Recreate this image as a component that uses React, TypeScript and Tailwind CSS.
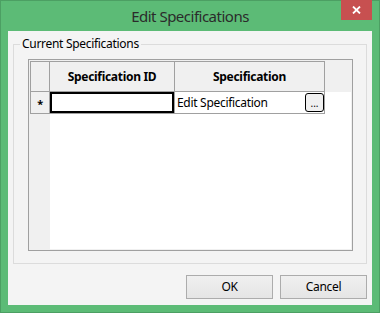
import React from 'react';

function CloseButton() {
  return (
    <div className="self-start justify-self-end -mt-px w-[31px] h-[20px] bg-[#c75050] flex items-center justify-center">
      <svg width="9" height="8" viewBox="0 0 9 8">
        <path d="M1 0.5 L8 7.5 M8 0.5 L1 7.5" stroke="#ffffff" strokeWidth="1.8" />
      </svg>
    </div>
  );
}

function DialogButton({ label }: { label: string }) {
  return (
    <button className="w-[87px] h-[24px] border border-[#acacac] bg-gradient-to-b from-[#f0f0f0] to-[#e5e5e5] text-[12px] tracking-[-0.3px] text-black leading-none">
      {label}
    </button>
  );
}

export default function App() {
  return (
    <div className="w-[380px] h-[313px] bg-[#5cbb76] border border-[#4c9f63] flex flex-col font-['Noto_Sans',sans-serif]">
      <div className="h-[30px] shrink-0 grid grid-cols-[1fr_auto_1fr] items-center px-[7px]">
        <div />
        <div className="text-[15px] tracking-[-0.5px] text-[#2b2b2b] leading-none">Edit Specifications</div>
        <CloseButton />
      </div>

      <div className="mx-[7px] mb-[7px] flex-1 bg-[#f4f4f4] flex flex-col px-[5px] tracking-[-0.3px]">
        {/* group box */}
        <div className="mt-[13px] w-[354px] h-[220px] border border-[#dcdcdc] flex flex-col">
          <div className="-mt-[9px] ml-[6px] self-start px-[2px] bg-[#f4f4f4] text-[12px] leading-[16px] text-black">
            Current Specifications
          </div>

          <div className="mt-[7px] ml-[14px] w-[325px] h-[192px] border border-[#a0a0a0] bg-[#f0f0f0] p-px flex flex-col text-[12px] text-black">
            <div className="h-[31px] flex">
              <div className="w-[20px] border border-[#a0a0a0]" />
              <div className="w-[125px] border-y border-r border-[#a0a0a0] flex items-center justify-center font-bold">
                Specification ID
              </div>
              <div className="w-[150px] border-y border-r border-[#a0a0a0] flex items-center justify-center font-bold">
                Specification
              </div>
              <div className="flex-1" />
            </div>

            <div className="h-[22px] flex">
              <div className="w-[20px] border-x border-b border-[#a0a0a0] flex items-center justify-center font-bold text-[11px] leading-none pt-[2px]">
                *
              </div>
              <div className="w-[125px] border-r border-b border-[#a0a0a0] bg-white">
                <div className="h-full border-2 border-black" />
              </div>
              <div className="w-[150px] border-r border-b border-[#a0a0a0] bg-white flex items-center justify-between pl-[2px]">
                <span className="leading-none">Edit Specification</span>
                <div className="w-[19px] h-[19px] border border-black rounded-[3px] bg-[#f0f0f0] flex items-end justify-center text-[10px] tracking-normal leading-[12px] pb-[2px]">
                  ...
                </div>
              </div>
              <div className="flex-1 bg-white" />
            </div>

            <div className="flex-1 flex">
              <div className="w-[20px]" />
              <div className="flex-1 bg-white" />
            </div>
          </div>
        </div>

        <div className="mt-[11px] flex justify-end gap-[7px]">
          <DialogButton label="OK" />
          <DialogButton label="Cancel" />
        </div>
      </div>
    </div>
  );
}
